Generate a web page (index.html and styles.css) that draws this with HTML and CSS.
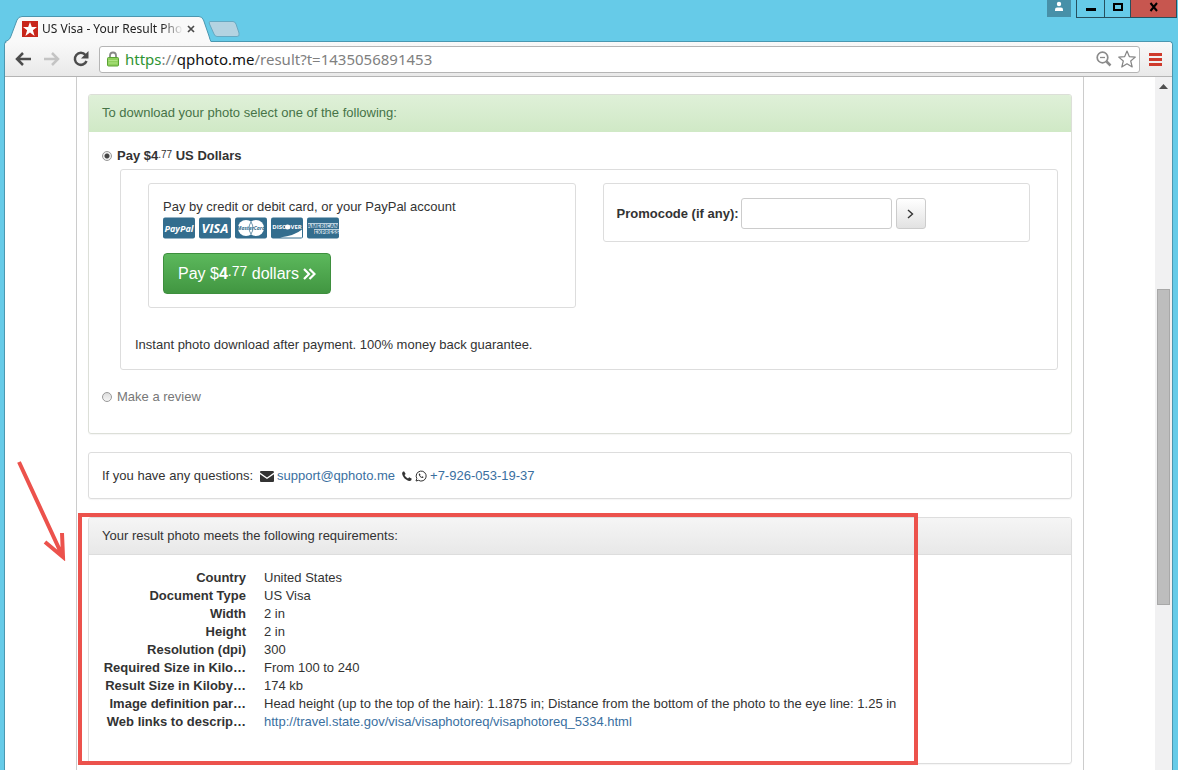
FILE: index.html
```html
<!DOCTYPE html>
<html lang="en">
<head>
<meta charset="utf-8">
<title>US Visa - Your Result Photo</title>
<link rel="stylesheet" href="styles.css">
</head>
<body>
<div class="browser">
  <header class="titlebar">
    <div class="tabs">
      <div class="tab">
        <svg class="tab-shape" viewBox="0 0 206 26" aria-hidden="true">
          <path d="M0 26C3 25 5 23 6 20L12 4Q13.500 .5 17 .5H194Q197 .5 198.500 4L204 20Q205 24 206 26Z" fill="#f9f9f9"/>
          <path d="M0 25.500C3 25 5 23 6 20L12 4Q13.500 .5 17 .5H194Q197 .5 198.500 4L204 20Q205 24 206 25.500" fill="none" stroke="#4b97b0"/>
        </svg>
        <svg class="favicon" viewBox="0 0 16 16" aria-hidden="true"><rect width="16" height="16" fill="#c8261b"/><path d="M8 1l1.800 5H15l-4.100 3.200L12.600 15 8 11.600 3.400 15l1.700-5.800L1 6h5.200z" fill="#fff"/></svg>
        <span class="tab-title">US Visa - Your Result Pho</span>
        <button class="tab-close" aria-label="Close tab"><svg width="8" height="8" viewBox="0 0 8 8"><path d="M1 1l6 6M7 1L1 7" stroke="#4b4b4b" stroke-width="1.700"/></svg></button>
      </div>
      <button class="new-tab" aria-label="New tab"><svg width="32" height="16" viewBox="0 0 32 16"><path d="M2 .5H25Q27 .5 28 3L31 12Q32 15.500 29 15.500H9Q7 15.500 6 13L1.500 3Q.5 .5 2 .5Z" fill="#b4d3e1" stroke="#66a9c2"/></svg></button>
    </div>
    <div class="window-controls">
      <button class="user" aria-label="User"><svg width="10" height="11" viewBox="0 0 10 11"><circle cx="5" cy="3" r="2.200" fill="#fff"/><path d="M1 10V8.500Q1 6.500 3 6.500H7Q9 6.500 9 8.500V10Z" fill="#fff"/></svg></button>
      <div class="control-group">
        <button class="control" aria-label="Minimize"><svg width="10" height="10" viewBox="0 0 10 10"><path d="M0 6h10v3H0z"/></svg></button>
        <button class="control" aria-label="Maximize"><svg width="10" height="10" viewBox="0 0 10 10"><path d="M1 2h8v6H1z" fill="none" stroke="#000" stroke-width="2"/></svg></button>
        <button class="control close" aria-label="Close"><svg width="10" height="10" viewBox="0 0 10 10"><path d="M1.500 1l6.500 8M8 1L1.500 9" stroke="#000" stroke-width="2"/></svg></button>
      </div>
    </div>
  </header>

  <div class="window">
    <nav class="toolbar">
      <div class="nav-buttons">
        <button class="icon-button" aria-label="Back"><svg width="16" height="14" viewBox="0 0 16 14"><path d="M8 1L2 7l6 6M2 7h14" fill="none" stroke="#4c4c4c" stroke-width="2.500"/></svg></button>
        <button class="icon-button" aria-label="Forward"><svg width="16" height="14" viewBox="0 0 16 14"><path d="M8 1l6 6-6 6M14 7H0" fill="none" stroke="#c4c4c4" stroke-width="2.500"/></svg></button>
        <button class="icon-button" aria-label="Reload"><svg width="16" height="16" viewBox="0 0 16 16"><path d="M12.500 4A6 6 0 1 0 13.500 10" fill="none" stroke="#4c4c4c" stroke-width="2.500"/><path d="M15.500 0v7.500H8z" fill="#4c4c4c"/></svg></button>
      </div>
      <div class="omnibox">
        <svg width="12" height="16" viewBox="0 0 12 16" aria-hidden="true"><path d="M3 7V4.500Q3 1.500 6 1.500T9 4.500V7" fill="none" stroke="#888" stroke-width="1.800"/><rect x=".5" y="6.500" width="11" height="8.500" rx="1" fill="#8fd05c" stroke="#5aa234"/><path d="M1.500 9.500h9M1.500 12h9" stroke="#b0e384"/></svg>
        <div class="url"><span class="scheme">https</span>://<span class="host">qphoto.me</span>/result?t=1435056891453</div>
        <button class="icon-button" aria-label="Zoom"><svg width="16" height="16" viewBox="0 0 16 16"><circle cx="6.500" cy="6.500" r="5.300" fill="none" stroke="#8b8b8b" stroke-width="1.700"/><path d="M4 6.500h5" stroke="#8b8b8b" stroke-width="1.300"/><path d="M10.500 10.500l4 4" stroke="#8b8b8b" stroke-width="2.500"/></svg></button>
        <button class="icon-button" aria-label="Bookmark"><svg width="18" height="18" viewBox="0 0 18 18"><path d="M9 1l2.300 5.600 6 .5-4.600 3.900 1.500 6L9 13.800 3.800 17l1.500-6L.7 7.100l6-.5z" fill="#fff" stroke="#858585" stroke-width="1.200" stroke-linejoin="round"/></svg></button>
      </div>
      <button class="icon-button menu" aria-label="Menu"><svg width="13" height="13" viewBox="0 0 13 13"><path d="M0 1.500h13M0 6.500h13M0 11.500h13" stroke="#cf3a2c" stroke-width="3"/></svg></button>
    </nav>

    <div class="viewport">
      <main class="page">
        <div class="container">
          <section class="panel panel-success">
            <h2 class="panel-heading">To download your photo select one of the following:</h2>
            <div class="panel-body">
              <label class="option selected"><input type="radio" name="method" checked><span>Pay $4<sup class="cents">.77</sup> US Dollars</span></label>
              <div class="box payment">
                <div class="columns">
                  <div class="box">
                    <p>Pay by credit or debit card, or your PayPal account</p>
                    <div class="cards">
                      <svg class="card" viewBox="0 0 32 21" role="img" aria-label="PayPal"><rect width="32" height="21" rx="2" fill="#336d8e"/><text x="16" y="14" class="card-text italic" font-size="9">PayPal</text></svg>
                      <svg class="card" viewBox="0 0 32 21" role="img" aria-label="Visa"><rect width="32" height="21" rx="2" fill="#336d8e"/><text x="16" y="15.500" class="card-text italic" font-size="13">VISA</text></svg>
                      <svg class="card" viewBox="0 0 32 21" role="img" aria-label="MasterCard"><rect width="32" height="21" rx="2" fill="#336d8e"/><circle cx="11" cy="10.500" r="8" fill="#fff"/><circle cx="21" cy="10.500" r="8" fill="#fff"/><path d="M16 4.500q-4 6 0 12q4-6 0-12" fill="none" stroke="#336d8e" stroke-width=".7"/><text x="16" y="12.500" class="card-text blue italic" font-size="5">MasterCard</text></svg>
                      <svg class="card" viewBox="0 0 32 21" role="img" aria-label="Discover"><rect width="32" height="21" rx="2" fill="#336d8e"/><path d="M9 20Q24 18 31 12V20Z" fill="#fff"/><text x="16" y="11.500" class="card-text" font-size="6">DISCOVER</text><circle cx="16.500" cy="9.500" r="2.500" fill="#fff"/></svg>
                      <svg class="card" viewBox="0 0 32 21" role="img" aria-label="American Express"><rect width="32" height="21" rx="2" fill="#336d8e"/><path d="M1 5.500h30v5H1zM7 11.500h25v5H7z" fill="#b9d0dd"/><text x="16" y="10.300" class="card-text blue" font-size="6">AMERICAN</text><text x="19.500" y="16.300" class="card-text blue" font-size="6">EXPRESS</text></svg>
                    </div>
                    <button class="pay-button"><span>Pay $<b>4</b><sup class="cents">.77</sup> dollars</span><svg width="13" height="12" viewBox="0 0 13 12" aria-hidden="true"><path d="M1 1l5 5-5 5M6.500 1l5 5-5 5" fill="none" stroke="#fff" stroke-width="2.200"/></svg></button>
                  </div>
                  <form class="box promo">
                    <label for="promo">Promocode (if any):</label>
                    <div class="promo-fields">
                      <input class="promo-input" id="promo" type="text">
                      <button class="promo-button" type="button" aria-label="Apply"><svg width="7" height="10" viewBox="0 0 7 10"><path d="M1 1l4.500 4L1 9" fill="none" stroke="#333" stroke-width="1.400"/></svg></button>
                    </div>
                  </form>
                </div>
                <p class="guarantee">Instant photo download after payment. 100% money back guarantee.</p>
              </div>
              <label class="option"><input type="radio" name="method"><span>Make a review</span></label>
            </div>
          </section>

          <section class="panel contact">
            <span>If you have any questions:</span>
            <svg class="mail" width="14" height="11" viewBox="0 0 14 11" aria-hidden="true"><path d="M0 1Q0 0 1 0H13Q14 0 14 1.500L7 6.500 0 1.500ZM0 3.300L7 8l7-4.700V10Q14 11 13 11H1Q0 11 0 10Z" fill="#333"/></svg>
            <a href="mailto:support@qphoto.me">support@qphoto.me</a>
            <svg class="phone" width="10" height="10" viewBox="0 0 10 10" aria-hidden="true"><path d="M2 .3L3.700 3 2.500 4Q3.500 6.300 6 7.500L7.200 6.300 9.800 7.800Q9.500 10 7.500 10C4 9.500 .5 6 .1 2.500Q.1 .5 2 .3Z" fill="#333"/></svg>
            <svg width="12" height="12" viewBox="0 0 12 12" aria-hidden="true"><path d="M1 11l.8-2.500A5 5 0 1 1 3.500 10.300Z" fill="none" stroke="#333"/><path d="M4.300 3.200q-1 .8-.2 2.200 1.200 2.200 3 2.600 1.300 0 1.500-1L7.300 6.300l-.7.6Q5.500 6.400 5 5.300l.5-.7z" fill="#333"/></svg>
            <a href="tel:+79260531937">+7-926-053-19-37</a>
          </section>

          <section class="panel requirements">
            <h2 class="panel-heading">Your result photo meets the following requirements:</h2>
            <dl class="details">
              <dt>Country</dt><dd>United States</dd>
              <dt>Document Type</dt><dd>US Visa</dd>
              <dt>Width</dt><dd>2 in</dd>
              <dt>Height</dt><dd>2 in</dd>
              <dt>Resolution (dpi)</dt><dd>300</dd>
              <dt>Required Size in Kilo…</dt><dd>From 100 to 240</dd>
              <dt>Result Size in Kiloby…</dt><dd>174 kb</dd>
              <dt>Image definition par…</dt><dd>Head height (up to the top of the hair): 1.1875 in; Distance from the bottom of the photo to the eye line: 1.25 in</dd>
              <dt>Web links to descrip…</dt><dd><a href="http://travel.state.gov/visa/visaphotoreq/visaphotoreq_5334.html">http://travel.state.gov/visa/visaphotoreq/visaphotoreq_5334.html</a></dd>
            </dl>
            <div class="highlight"></div>
            <svg class="arrow" width="52" height="102" viewBox="0 0 52 102" aria-hidden="true"><path d="M3 3L46 96M29 83L47 98L46 74" fill="none" stroke="#ec524c" stroke-width="4"/></svg>
          </section>
        </div>
      </main>
      <div class="scrollbar">
        <svg width="9" height="5" viewBox="0 0 9 5" aria-hidden="true"><path d="M0 5L4.500 0 9 5z" fill="#505050"/></svg>
        <div class="thumb"></div>
      </div>
    </div>
  </div>
</div>
</body>
</html>
```

FILE: styles.css
```css
* { box-sizing: border-box; }
body {
  margin: 0;
  background: #66cbe8;
  color: #333;
  font: 13px/18px "Liberation Sans", Arial, sans-serif;
}
button { margin: 0; padding: 0; border: 0; background: none; font: inherit; color: inherit; }
svg { display: block; flex: none; }
p, h2, dl, dd { margin: 0; }
a { color: #3a6f9f; text-decoration: none; }

.browser { display: flex; flex-direction: column; height: 100vh; overflow: hidden; }
.titlebar { display: flex; justify-content: space-between; height: 41px; }
.tabs { display: flex; align-items: flex-end; padding-left: 5px; }
.tab {
  position: relative;
  z-index: 1;
  display: flex;
  align-items: center;
  width: 206px;
  height: 26px;
  margin-bottom: -1px;
  padding: 0 12px 0 17px;
}
.tab-shape { position: absolute; inset: 0; width: 100%; height: 100%; z-index: -1; }
.favicon { width: 16px; height: 16px; }
.tab-title {
  flex: 1;
  margin-left: 4px;
  white-space: nowrap;
  font: 12px/18px "Noto Sans", "Open Sans", sans-serif;
  color: #222;
  mask-image: linear-gradient(to right, #000 85%, transparent);
}
.tab-close { width: 16px; padding: 4px; }
.new-tab { margin: 0 0 4px -3px; }

.window-controls { display: flex; align-items: flex-start; gap: 5px; padding-right: 1px; }
.user { display: flex; justify-content: center; width: 24px; height: 17px; padding-top: 1px; background: #4790a8; }
.control-group { display: flex; height: 18px; border: 1px solid #26505e; border-top: 0; }
.control { display: flex; align-items: center; justify-content: center; width: 28px; padding-bottom: 4px; border-right: 1px solid #26505e; }
.control:nth-child(2) { width: 26px; }
.control.close { width: 45px; border-right: 0; background: #c7564f; }

.window {
  flex: 1;
  min-height: 0;
  display: flex;
  flex-direction: column;
  margin: 0 5px 0 4px;
  border: 1px solid #4b97b0;
  border-bottom: 0;
  border-radius: 4px 4px 0 0;
  background: #fff;
}
.toolbar {
  display: flex;
  align-items: center;
  height: 35px;
  padding: 0 10px;
  border-bottom: 1px solid #b4b4b4;
  border-radius: 4px 4px 0 0;
  background: linear-gradient(#f9f9f9, #e9e9e9);
}
.nav-buttons { display: flex; align-items: center; gap: 13px; width: 84px; }
.omnibox {
  flex: 1;
  display: flex;
  align-items: center;
  gap: 6px;
  height: 27px;
  padding: 0 3px 0 7px;
  border: 1px solid #b5b5b5;
  border-radius: 3px;
  background: #fff;
}
.url { flex: 1; font: 15px/22px "Noto Sans", "Open Sans", sans-serif; color: #808080; }
.scheme { color: #2f9433; }
.host { color: #111; }
.menu { margin-left: 9px; }

.viewport { flex: 1; min-height: 0; display: flex; }
.page { flex: 1; overflow: hidden; }
.container {
  min-height: 100%;
  margin: 0 71px;
  padding: 17px 11px 0;
  border: solid #ccc;
  border-width: 0 1px;
}
.scrollbar { width: 17px; padding: 7px 2px 0; background: #f1f1f2; }
.scrollbar svg { margin: 0 auto; }
.thumb { width: 13px; height: 316px; margin-top: 200px; border: 1px solid #a8a8a8; background: #bdbdbd; }

.panel { margin-bottom: 18px; border: 1px solid #ddd; border-radius: 3px; box-shadow: 0 1px 1px rgba(0, 0, 0, .04); }
.panel-heading {
  padding: 9px 13px;
  border-bottom: 1px solid #ddd;
  border-radius: 2px 2px 0 0;
  background: linear-gradient(#f5f5f5, #e8e8e8);
  font-size: 13px;
  font-weight: 400;
}
.panel-success { border-color: #dcdfd8; }
.panel-success .panel-heading { border-color: #d0e9c6; background: linear-gradient(#dff0d8, #d0e9c6); color: #467347; }
.panel-body { padding: 15px 13px 27px; }
.option { display: flex; align-items: center; gap: 5px; color: #777; }
.option.selected { color: #333; font-weight: 700; }
.option input {
  appearance: none;
  width: 10px;
  height: 10px;
  margin: 0;
  border: 1px solid #999;
  border-radius: 50%;
  background: linear-gradient(#ddd, #f5f5f5);
}
.option input:checked { background: radial-gradient(circle, #444 0 2px, #eee 3px); }
.cents { font-size: 10px; font-weight: 400; line-height: 0; vertical-align: 2px; }
.box { border: 1px solid #ddd; border-radius: 3px; }
.payment { margin: 4px 0 18px 18px; padding: 13px 14px 15px; }
.columns { display: grid; grid-template-columns: 1fr 1fr; align-items: start; gap: 27px; padding: 0 13px; }
.columns .box { padding: 14px 14px 13px; }
.cards { display: flex; gap: 4px; margin: 1px 0 14px; }
.card { width: 32px; height: 22px; }
.card-text { fill: #fff; font-family: "Open Sans", "Liberation Sans", sans-serif; font-weight: 700; text-anchor: middle; }
.card-text.italic { font-style: italic; }
.card-text.blue { fill: #336d8e; }
.pay-button {
  display: flex;
  align-items: center;
  gap: 4px;
  height: 41px;
  padding: 0 14px;
  border: 1px solid #3e8f3e;
  border-radius: 4px;
  background: linear-gradient(#5cb85c, #419641);
  color: #fff;
  font-size: 16px;
}
.pay-button .cents { font-size: 14px; vertical-align: 3px; }
.columns .promo { display: flex; align-items: center; gap: 2px; padding: 14px 13px 12px; }
.promo label { font-weight: 700; }
.promo-fields { display: flex; gap: 4px; }
.promo-input { width: 151px; height: 31px; padding: 4px 8px; border: 1px solid #ccc; border-radius: 3px; font: inherit; }
.promo-button {
  display: flex;
  align-items: center;
  justify-content: center;
  width: 30px;
  height: 31px;
  border: 1px solid #ccc;
  border-radius: 3px;
  background: linear-gradient(#fff, #e2e2e2);
}
.guarantee { margin-top: 28px; }

.contact { display: flex; align-items: center; gap: 3px; padding: 14px 13px 13px; }
.mail { margin-left: 4px; }
.phone { margin-left: 4px; }

.requirements { position: relative; }
.details {
  display: grid;
  grid-template-columns: 144px 1fr;
  column-gap: 18px;
  padding: 14px 13px 32px;
}
.details dt { white-space: nowrap; text-align: right; font-weight: 700; }
.highlight { position: absolute; top: -5px; left: -11px; width: 840px; height: 252px; border: 4px solid #ec524c; }
.arrow { position: absolute; top: -59px; left: -73px; }
```
